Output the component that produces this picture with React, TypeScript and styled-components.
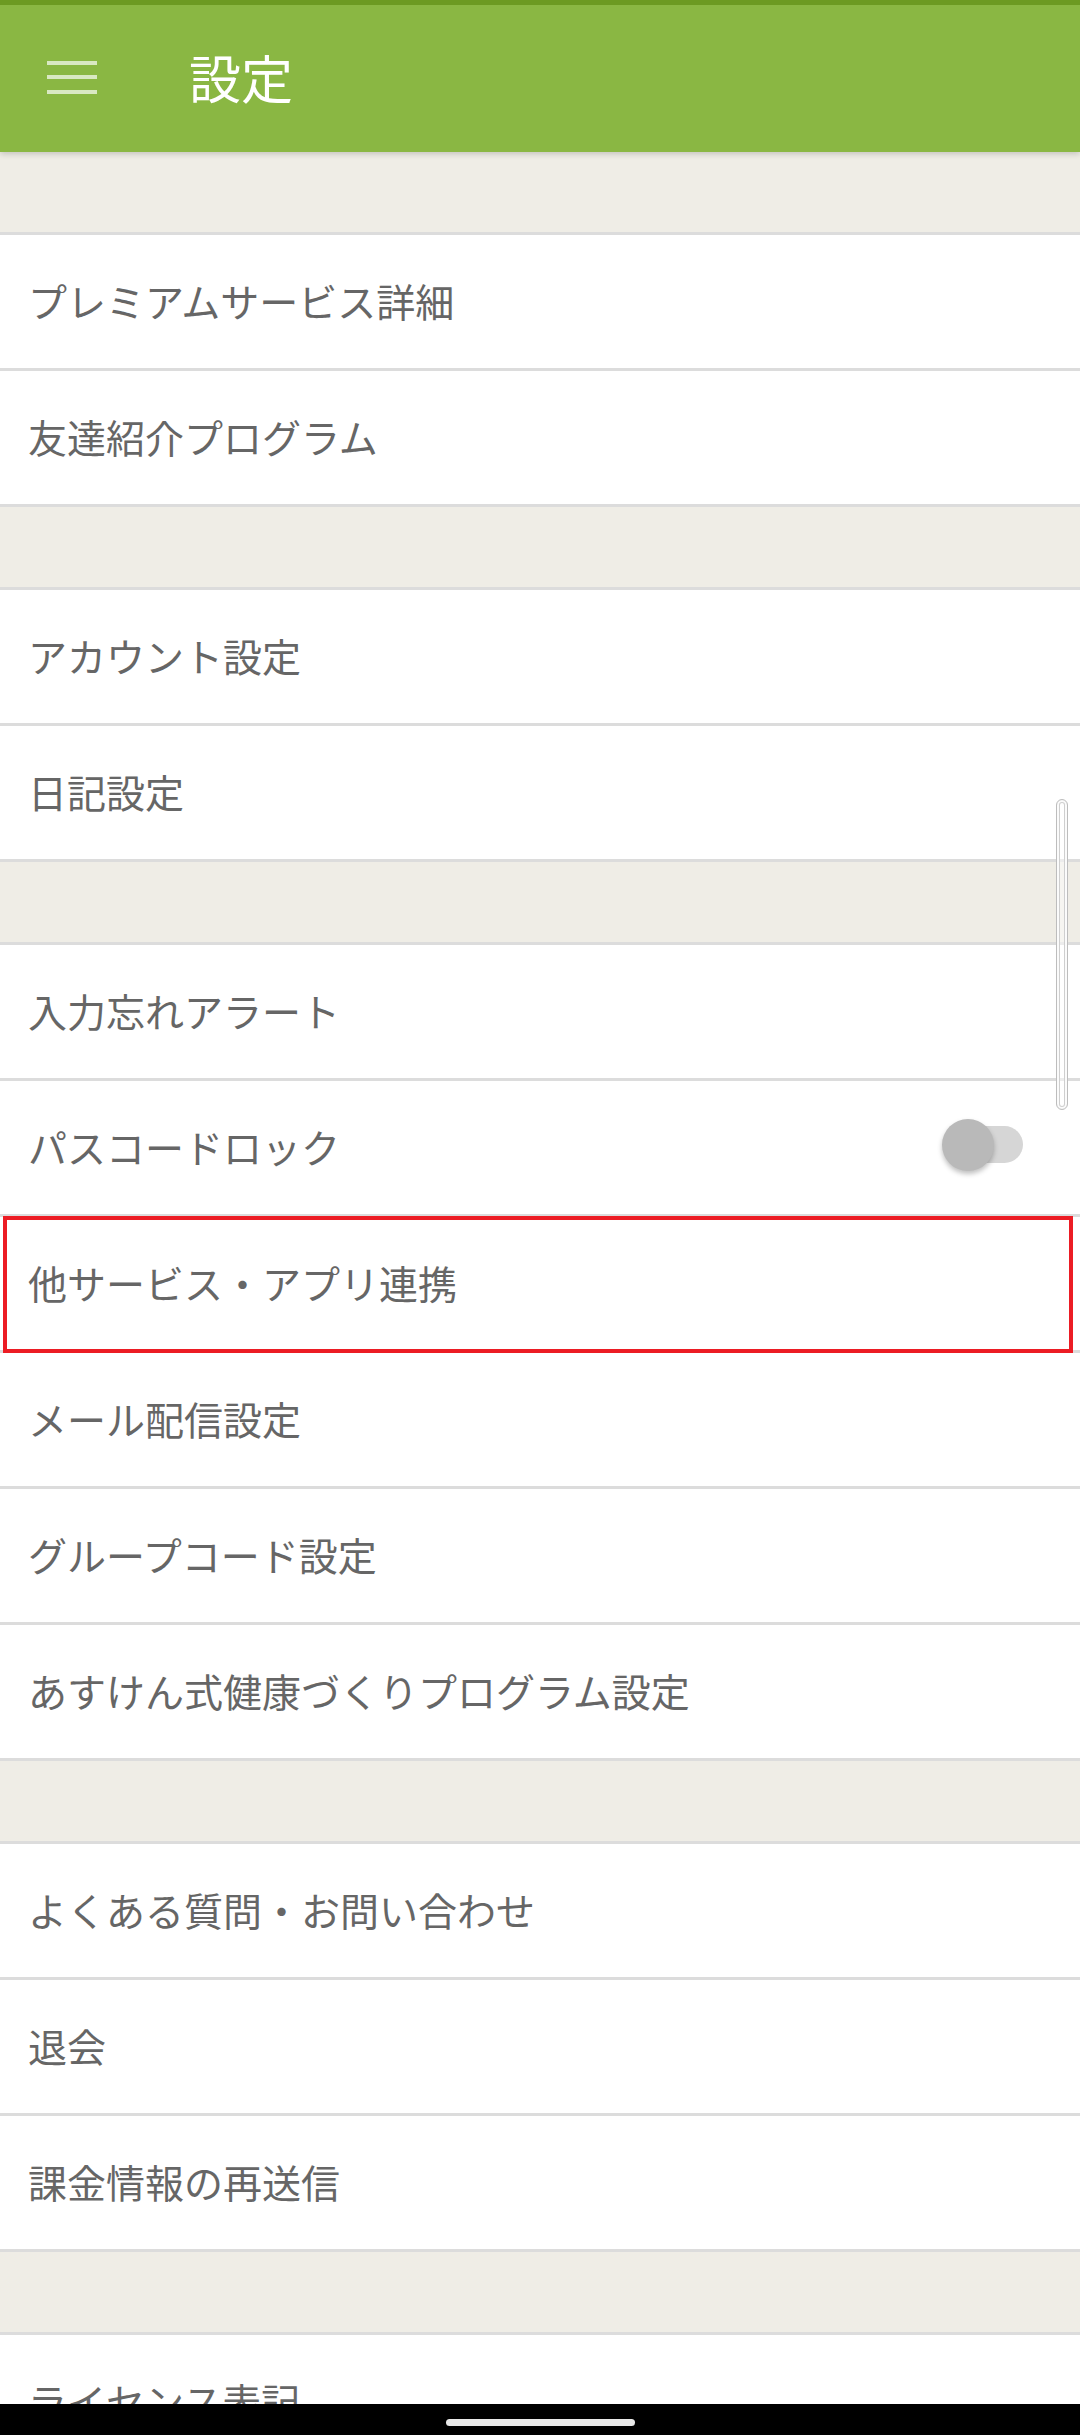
import styled, { createGlobalStyle } from "styled-components";

const GlobalStyle = createGlobalStyle`
  html, body {
    margin: 0;
    padding: 0;
    background: #ffffff;
  }
  * {
    box-sizing: border-box;
  }
`;

type Item = { label: string; toggle?: boolean; highlight?: boolean };

// 設定メニューのグループ
const groups: Item[][] = [
  [{ label: "プレミアムサービス詳細" }, { label: "友達紹介プログラム" }],
  [{ label: "アカウント設定" }, { label: "日記設定" }],
  [
    { label: "入力忘れアラート" },
    { label: "パスコードロック", toggle: true },
    { label: "他サービス・アプリ連携", highlight: true },
    { label: "メール配信設定" },
    { label: "グループコード設定" },
    { label: "あすけん式健康づくりプログラム設定" },
  ],
  [
    { label: "よくある質問・お問い合わせ" },
    { label: "退会" },
    { label: "課金情報の再送信" },
  ],
  [{ label: "ライセンス表記" }],
];

function MenuRow({ item }: { item: Item }) {
  return (
    <Row>
      <RowLabel>{item.label}</RowLabel>
      {item.toggle && (
        <Switch>
          <SwitchTrack />
          <SwitchKnob />
        </Switch>
      )}
      {item.highlight && <Highlight />}
    </Row>
  );
}

export default function App() {
  return (
    <>
      <GlobalStyle />
      <Screen>
        <Header>
          <StatusStrip />
          <AppBar>
            <MenuButton aria-label="menu">
              <MenuLine />
              <MenuLine />
              <MenuLine />
            </MenuButton>
            <Title>設定</Title>
          </AppBar>
        </Header>

        <ScrollArea>
          <List>
            {groups.map((group, gi) => (
              <Group key={gi}>
                <Spacer />
                {group.map((item, i) => (
                  <MenuRow key={i} item={item} />
                ))}
              </Group>
            ))}
          </List>
          <ScrollThumb />
        </ScrollArea>

        <NavBar>
          <HomeIndicator />
        </NavBar>
      </Screen>
    </>
  );
}

const Screen = styled.div`
  width: 1080px;
  height: 2435px;
  display: flex;
  flex-direction: column;
  overflow: hidden;
  background: #ffffff;
  font-family: "Noto Sans CJK JP", "Noto Sans", sans-serif;
`;

const Header = styled.header`
  display: flex;
  flex-direction: column;
  flex-shrink: 0;
  position: relative;
  z-index: 2;
  box-shadow: 0 2px 6px rgba(0, 0, 0, 0.18);
`;

const StatusStrip = styled.div`
  height: 5px;
  background: #6c9a22;
`;

const AppBar = styled.div`
  height: 147px;
  display: flex;
  align-items: center;
  padding-left: 47px;
  gap: 92px;
  background: #8ab743;
`;

const MenuButton = styled.div`
  width: 50px;
  display: flex;
  flex-direction: column;
  gap: 10.5px;
  margin-top: -3px;
`;

const MenuLine = styled.span`
  display: block;
  height: 4px;
  background: rgba(255, 255, 255, 0.68);
`;

const Title = styled.h1`
  margin: 0;
  font-size: 52px;
  font-weight: 400;
  line-height: 1;
  color: #ffffff;
  margin-top: -3px;
`;

const ScrollArea = styled.div`
  flex: 1;
  position: relative;
  overflow: hidden;
`;

const List = styled.div`
  display: flex;
  flex-direction: column;
`;

const Group = styled.section`
  display: flex;
  flex-direction: column;
`;

const Spacer = styled.div`
  height: 83px;
  background: #efede6;
  border-bottom: 3px solid #dcdcdc;
`;

const Row = styled.div`
  position: relative;
  height: 136px;
  display: flex;
  align-items: center;
  justify-content: space-between;
  padding: 0 57px 0 28px;
  background: #ffffff;
  border-bottom: 3px solid #dcdcdc;
`;

const RowLabel = styled.span`
  font-size: 39px;
  font-weight: 400;
  color: #666666;
  line-height: 1;
  white-space: nowrap;
  margin-top: -2px;
`;

const Switch = styled.div`
  position: relative;
  width: 81px;
  height: 52px;
  display: flex;
  align-items: center;
  justify-content: flex-end;
  margin-top: -6px;
`;

const SwitchTrack = styled.div`
  width: 70px;
  height: 37px;
  border-radius: 18.5px;
  background: #d6d6d6;
`;

const SwitchKnob = styled.div`
  position: absolute;
  left: 0;
  top: 0;
  width: 52px;
  height: 52px;
  border-radius: 50%;
  background: #b9b9b9;
  box-shadow: 0 3px 5px rgba(0, 0, 0, 0.25);
`;

const Highlight = styled.div`
  position: absolute;
  left: 3px;
  right: 7px;
  top: -1px;
  bottom: -3px;
  border: 4px solid #ec1c24;
  pointer-events: none;
`;

const ScrollThumb = styled.div`
  position: absolute;
  top: 647px;
  right: 12px;
  width: 12px;
  height: 311px;
  border-radius: 6px;
  border: 1px solid #bdbdbd;
  background: rgba(255, 255, 255, 0.45);
  box-shadow: inset 0 0 0 2px rgba(255, 255, 255, 0.9),
    inset 0 0 0 3px #cfcfcf;
`;

const NavBar = styled.div`
  height: 31px;
  flex-shrink: 0;
  display: flex;
  align-items: center;
  justify-content: center;
  background: #000000;
`;

const HomeIndicator = styled.div`
  width: 189px;
  height: 7px;
  border-radius: 4px;
  background: #e8e8e8;
  margin-top: 5px;
`;
